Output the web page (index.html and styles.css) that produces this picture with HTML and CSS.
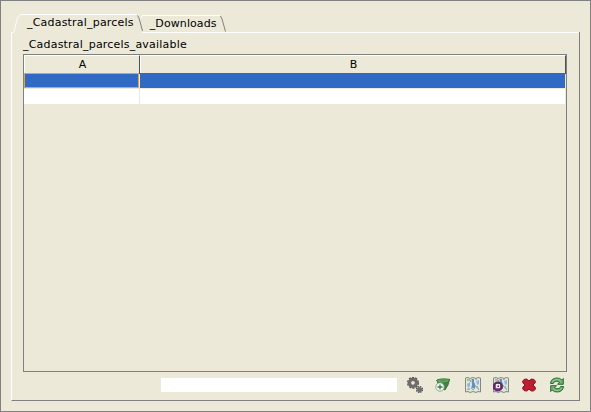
FILE: index.html
```html
<!DOCTYPE html>
<html lang="en">
<head>
<meta charset="utf-8">
<title>Cadastral parcels</title>
<link rel="stylesheet" href="styles.css">
</head>
<body>
<div class="window">
  <nav class="tabs">
    <svg class="tab-lines" width="230" height="20" viewBox="0 0 230 20" fill="none">
      <path class="light" d="M.5 19V18.5H2.5L3.5 16.5V14.5L4.5 12.5V10.5L5.5 8.5V6.5L6.500 4.500L8.500 1.500L9.500 .5H126"/>
      <path class="dark" d="M126.500 1.500L128 4L131.500 17"/>
      <path class="light" d="M129.500 4.500L131.500 1.500H209M131 18.500H230"/>
      <path class="dark" d="M209.500 2L211 5L214.500 17.500"/>
    </svg>
    <span class="tab first">_Cadastral_parcels</span>
    <span class="tab second">_Downloads</span>
  </nav>
  <main class="panel">
    <div class="label">_Cadastral_parcels_available</div>
    <div class="table">
      <div class="row head"><div>A</div><div>B</div></div>
      <div class="row selected"><div></div><div></div></div>
      <div class="row"><div></div><div></div></div>
    </div>
    <div class="toolbar">
      <div class="field"></div>
      <svg width="16" height="16" viewBox="0 0 16 16"><g fill="none" stroke="#4e4e4e"><circle cx="6" cy="5.800" r="5.200" stroke-width="1.600" stroke-dasharray="2.100 1.170"/><circle cx="6" cy="5.800" r="3.500" stroke="#6c6c6a" stroke-width="3.200"/><circle cx="12.500" cy="12.500" r="3" stroke-width="1.200" stroke-dasharray="1.500 .85"/><circle cx="12.500" cy="12.500" r="1.600" fill="#666" stroke="#707070" stroke-width="2"/></g></svg>
      <svg width="16" height="16" viewBox="0 0 16 16"><path d="M2 3L14.500 2.500L13 8L10 13L6 11L3 7Z" fill="#438348" stroke="#28652f" stroke-width=".8"/><path d="M1.500 3.500Q5 .8 14.500 2.300L13.500 5Q9 7 3.500 5.500Z" fill="#67a765" stroke="#2f7135" stroke-width=".8"/><path d="M4 3.500Q8 2.500 12 3.500Q8 5 4 3.500" fill="#4a8b4c"/><circle cx="5" cy="10" r="4.200" fill="#f5faf3" stroke="#81927f" stroke-width=".8"/><path d="M5 7.500V12.500M2.500 10H7.500" stroke="#378040" stroke-width="1.300"/></svg>
      <svg class="map" width="16" height="16" viewBox="0 0 16 16"><use href="#map"/></svg>
      <svg width="16" height="16" viewBox="0 0 16 16"><use href="#map"/><circle cx="4.800" cy="9.500" r="4" fill="#8c5c92" stroke="#5b2868" stroke-width="2"/><path d="M3 7H7V11H3Z" fill="#f0e8ef"/><path d="M4.500 8.500H6V10H4.500Z" fill="#4d2555"/></svg>
      <svg width="16" height="16" viewBox="0 0 16 16"><path d="M3 2.500L5.500 2L8 3.800L10.500 2L13 2.500L14.500 4.500L14 6L12 8L14 10L14.500 12L12.500 14L10.500 14L8 12.200L5.500 14L3 13.500L1.500 11.500L2 10L4 8L2 6L1.500 4.500Z" fill="#bd1f32" stroke="#8b101f"/></svg>
      <svg width="16" height="16" viewBox="0 0 16 16"><g id="arrow"><path d="M1.500 6.500Q2 1.500 7.500 1Q11 .8 12.800 3L14.300 1.500V7.300H8.500L10.500 5.300Q8 3.500 6 4.500Q4.700 5 4.300 6.500Z" fill="#70ad70" stroke="#286e35"/><path d="M3 5Q4.500 2.500 8 2.500Q10.500 2.600 12 4.500" fill="none" stroke="#a1cc9a" stroke-width=".8"/></g><use href="#arrow" transform="rotate(180 8 8)"/></svg>
    </div>
  </main>
</div>
<svg class="defs" width="0" height="0"><defs><g id="map">
  <path d="M.5 1L3 .5L5 1.500L8 .5L11 1.500L13 .5L15.500 1V15L13 14.500L11 15.500L8 14.500L5 15.500L3 14.500L.5 15Z" fill="#dfe6dc" stroke="#858784"/>
  <path d="M6.500 2H9V5L10 7V12L8 11L6 12L7 8Z" fill="#5d91cb"/><path d="M2 7L5 5V9L3 11Z" fill="#91b3db"/><path d="M11 4L14 3V7L12 8Z" fill="#95b7dd"/><path d="M12 9L14 12H12Z" fill="#88aed9"/>
  <path d="M2 2H5V4H2ZM11 9H13V11H11ZM3 11H5V13H3ZM10 2H12V3H10Z" fill="#9bc486"/><path d="M5 3H6V5H5ZM10 8H11V10H10ZM2 12H3V13H2ZM7 12H9V13H7ZM13 12H14V13H13Z" fill="#d19a60"/>
</g></defs></svg>
</body>
</html>
```
FILE: styles.css
```css
* { box-sizing: border-box; }
body { margin: 0; background: #ece9d8; font: 11px/13px "DejaVu Sans", sans-serif; letter-spacing: .2px; color: #000; }
.window { width: 591px; height: 412px; border: 1px solid #808080; padding: 13px 10px 10px; }
.tabs { position: relative; display: flex; height: 18px; }
.tab-lines { position: absolute; left: 0; top: 0; }
.light { stroke: #fff; }
.dark { stroke: #808080; }
.tab { position: relative; }
.first { margin: 2px 0 0 16px; }
.second { margin: 3px 0 0 16px; letter-spacing: .1px; }
.panel { width: 569px; height: 369px; padding: 6px 12px 0 11px; border: 1px solid #808080; border-top: 0; border-left-color: #fff; background: linear-gradient(#fff, #fff) 132px 0 / 436px 1px no-repeat; }
.label { height: 16px; }
.table { width: 544px; height: 318px; border: 1px solid #808080; }
.row { display: grid; grid-template-columns: 115px 425px; column-gap: 1px; height: 15px; margin-bottom: 1px; }
.row > div { background: #fff; }
.head { grid-template-columns: 116px 426px; column-gap: 0; height: 18px; margin: 0; text-align: center; line-height: 17px; }
.head > div { padding-left: 1px; background: #ece9d8; border: 1px solid #fff; border-right-color: #4f5254; border-bottom-color: #4f5254; }
.selected > div { background: #316ac5; }
.selected > div:first-child { border: 1px solid #f0a221; }
.toolbar { display: flex; align-items: center; height: 26px; padding-left: 138px; }
.toolbar svg { margin-right: 12px; flex: none; }
.toolbar .map { margin-left: 2px; }
.field { width: 236px; height: 14px; margin-right: 10px; background: #fff; flex: none; }
.defs { position: absolute; }
```
